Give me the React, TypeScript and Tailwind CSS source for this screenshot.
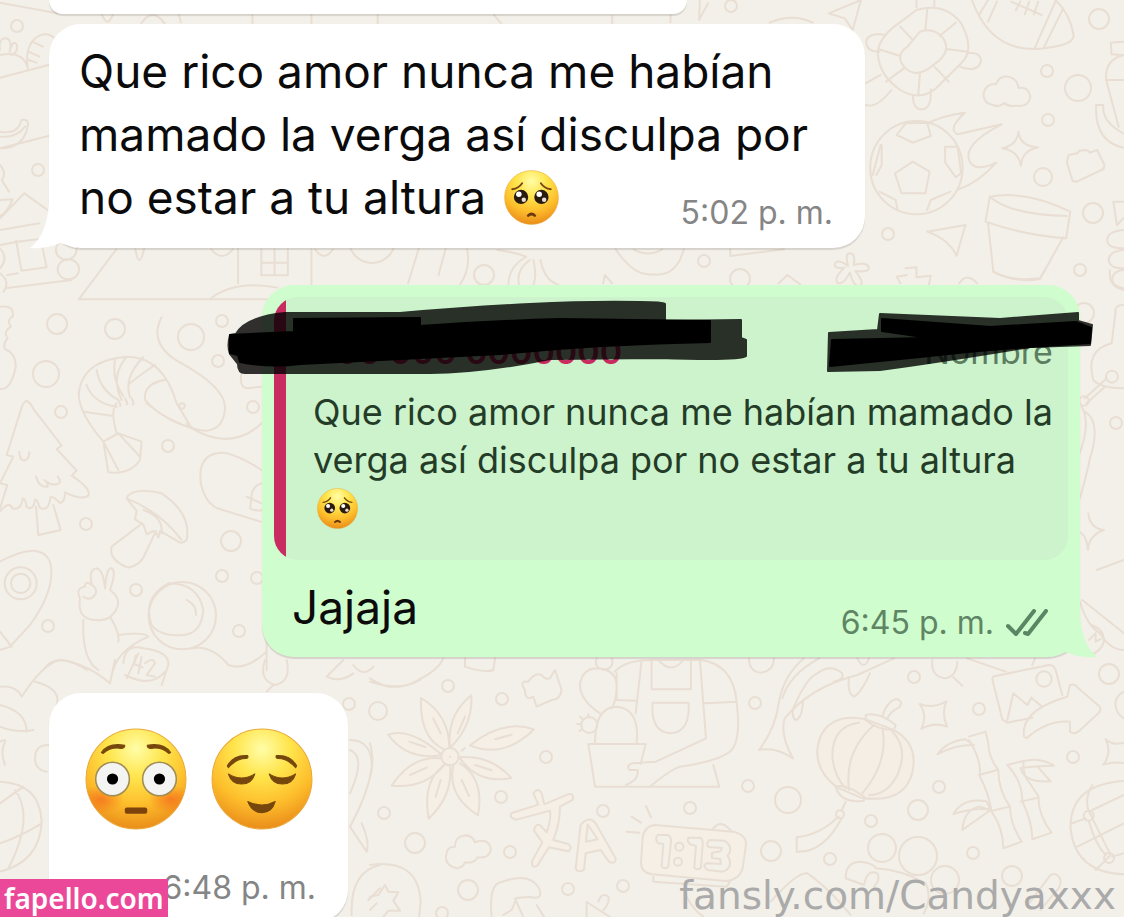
import type { ReactNode } from 'react';

const FONT = "font-['Inter','Liberation_Sans',sans-serif]";

// x, y, radius
const dots = [
  [57, 324, 10], [115, 329, 10], [191, 337, 13], [222, 321, 6], [218, 361, 6], [46, 374, 13], [61, 412, 6],
  [168, 446, 6], [253, 407, 6], [86, 524, 6], [231, 541, 10], [222, 576, 6], [257, 578, 6], [136, 590, 6],
  [48, 626, 6], [239, 631, 6], [731, 6, 6], [1099, 19, 10], [1047, 71, 6], [1078, 88, 13], [1048, 120, 6],
  [1043, 177, 9], [1093, 213, 10], [888, 234, 6], [1080, 270, 6], [704, 261, 6], [740, 279, 10], [17, 26, 6],
  [38, 170, 6], [484, 275, 10], [372, 240, 23], [1084, 313, 10], [1116, 423, 6], [448, 686, 6], [378, 711, 9],
  [502, 699, 6], [546, 757, 6], [501, 797, 6], [384, 813, 6], [415, 843, 10], [510, 852, 6], [468, 890, 10],
  [568, 889, 6], [623, 886, 6], [603, 811, 6], [690, 808, 6], [442, 913, 6], [755, 703, 6], [914, 677, 6],
  [979, 709, 6], [1109, 674, 10], [1073, 757, 6], [748, 786, 6], [788, 800, 13], [939, 787, 6], [918, 810, 10],
  [871, 821, 6], [771, 851, 10], [830, 859, 6], [973, 853, 6], [1012, 876, 10], [882, 848, 14], [918, 856, 19],
  [945, 880, 14], [349, 704, 6],
];

function Doodles() {
  return (
    <svg
      className="absolute inset-0 h-full w-full [&_*]:[vector-effect:non-scaling-stroke]"
      viewBox="0 0 1124 917"
      preserveAspectRatio="xMinYMin slice"
      fill="none"
      stroke="#e9ded3"
      strokeWidth="2"
      strokeLinecap="round"
      strokeLinejoin="round"
      aria-hidden="true"
    >
      {dots.map(([x, y, r]) => (
        <circle key={`${x}-${y}`} cx={x} cy={y} r={r} />
      ))}

      {/* top left: bread, banana, train */}
      <g transform="scale(.358 .3333)">
        <path d="M0 8L160 40M0 233L135 195M0 445L135 408M0 150q-5-35 15-35 20 0 12 40 10-40 20-20 5 20-15 30M0 165q65-15 78 40M78 205q-10-60 20-90 30-25 55 0M90 125l30 15M80 155l30 15M80 180l22 8" />
        <path d="M0 395q50 10 60-35 20-5 18 15-10 70-78 70M0 410q45 5 70-30M0 495q20 25 5 45l20 35M0 600l35-2q-15 40-35 50M0 655l68-75 65 50M0 690l110-20M0 735l50-10 75-10M45 722l15 90 70-10-15-80M0 745q25 30 0 60M0 820q30 25 10 55M15 865l185-25M20 825l30-5" />
        <circle cx="185" cy="750" r="29" /><circle cx="191" cy="808" r="30" />
        <path d="M325 748L220 898H760M378 745q10 70 25 0M665 745v105M730 748v78h74v-78M767 748v78M730 788h74M870 748v110M585 898q70-60 190-35M590 748q30 40 60 0M880 748q25 40 50 0M1170 745l-30 105M1245 745l-20 80M1305 748q10 60-20 105M1390 750q40 5 80 20-50 30-50 85M1480 780q-40 30-30 75M1490 780q10 50 0 75M1510 780q10 60 50 75" />
        <path d="M395 70q30-50 65 0M285 45q15 40 30 0M500 45l5 22M705 45v25M870 45v25M1055 45v25M1380 45l20 25" />
      </g>

      {/* top right: turtle, ball, football, bottle, pot */}
      <g transform="translate(562 0) scale(.358 .3333)">
        <path d="M140 48v22M303 45v22M385 0l-2 60 25-50M580 68q65-30 120 0M745 40L835 0 812 90 790 55zM990 0v22M1040 0v25" />
        <path d="M990 30q80-25 125 40 40 80 0 120l-70 75q-45 40-100 5-60-45-63-110 2-50 65-95z" />
        <path d="M1000 95q40-15 65 20 20 35-10 65l-30 25q-40 30-70-5-25-35 10-60zM945 80l35 40M1020 30l-5 60M1100 68l-45 40M1133 155l-60-8M1080 245l-40-45M995 285l5-65M905 245l50-40M885 148l60 20" />
        <path d="M905 105q-50-10-55 20 0 30 37 30M1132 160q40-5 38 25-10 35-60 15M980 285q0 45 28 43 25-5 22-60M890 225l-42 25M920 270q-40 55-72 45" />
        <path d="M1145 0q60 180 230 140 60-10 53-40-10-60-50-100M1165 45L1190 0M1190 65l25-60M1320 145L1380 0M1345 145l55-120M1255 5l85 40M1280 5l-12 25M1305 5l-12 38M1330 5l-12 38" />
        <path d="M1205 315q-30-5-27-35 5-30 35-28 10-30 40-20 20 8 22 32 30-5 33 28-5 30-40 25-20 5-32-8-15 15-31 6zM1275 395q5 45 55 47-45 10-48 55-8-45-52-52 42-10 45-50M1020 695l107-20-25 93q-20-50-82-73" />
        <ellipse cx="990" cy="503" rx="129" ry="140" />
        <path d="M980 485l47 30-12 65h-67l-18-60zM935 405l25-35 60-2 10 40-50 20zM890 435l-22 90M893 435v60l-15 30M1070 440h35l10 80-15 12-30-45zM887 575l45 25 5 30M1020 630l10-30 55-25M1020 370q50-25 105-32-50 50-20 65l123-30q-110 60-90 110 15 35 75 5-50 60-105 80" />
        <path d="M1410 485l5-20 25-5 5-8 20-2 10 8 20-8 20 45-2 12-75 38-12-2zM1195 590q100-20 225 45l-12 80q-120-10-225-50zM1195 590q60 55 215 58M1190 670l15 145q60 35 130 22l65-125M1568 125l-35 3 2 35 33 3M1520 240q-5-60 48-75M1520 240h48M1520 240l35 140M1492 315h20q-5 50 56 85M1492 315q-5 110 76 128M1540 605h28M1540 605l10 70 18-20M1568 690q-45 5-45 30 0 25 45 25M1568 750q-45 5-40 35 5 20 40 20M1568 810q-35 5-30 35 5 15 30 20" />
        <path d="M805 760q15 0 10 35 40-10 42 8 0 15-38 10 30 40 10 45-15 0-25-40-20 40-35 30-10-15 20-45-35 5-25-15 10-10 35 10-10-40 6-38zM960 805l30-3v30l40-5-5 28M945 850l-10-20 28-5M1110 850q20-35 50 0M605 850l25-25 35 28M115 850l5-25 20 25M150 748q50 80 100 75 70 10 90-75M200 748q40 25 80 0M470 748v20l150-20" />
      </g>

      {/* left column: shrimp, tree, mushroom, pin, astronaut */}
      <g transform="translate(0 270) scale(.3333)">
        <path d="M0 110q45-5 38 30-20 10-5 30-25 15-10 35-15 15-8 32 35 15 32 55-15 70-47 65M485 142q-40 75 45 130 150 80 145 145-5 60-55 65-40 0-60-20M575 475q120 70 210-15" />
        <path d="M310 515q-90-105-70-165 20-80 140-90 110 0 150 140l45 75q-70-20-135-75M350 490q-20-70 0-90M310 515l45-25 70 25-5 55q-30 45-95 37zM310 515l45 85M355 490l65 70M250 425l85 12M260 345q20 55 90 65M290 300q10 60 65 90M345 268q-10 60 25 110M380 260q-50 60-15 130M430 262q-60 60-40 120M465 285q-60 40-80 60M435 390q-5-50 60-60M435 390q40 50 140 85M355 390q10 20 5 18M375 385q10 20 5 18M395 385q10 20 3 18" />
        <circle cx="546" cy="408" r="8" />
        <path d="M80 392q-10 5-15 20L20 555l20 5-40 80 22 5L0 715M80 392q15 10 20 25l85 110-15 10 60 65-15 15q60 40 50 60-20 15-70-10 0 30-15 32-30-30-30-10-5 35-30 25-10-30-15-25-5 35-25 22-5-30-12-25-5 35-30 30-10-25-38 8M108 710l7 85 67-15-22-75M58 545q0 25 15 27 15-5 15-25M108 620q10 35 35 30 0-15-10-20 20 20 45 10 5-10-5-20" />
        <path d="M380 685q15-35 105-15 90 60 75 140-10 10-20 8l-60-35-5 20q-5-15-15-20l-20 10-10-30-25-15 5-25zM380 685q100 40 165 125M430 720q60 20 55 70M420 765l-85 65q-10 40 50 63 30-5 45-30l38-80" />
        <path d="M785 600Q690 540 650 550q-55 10-48 85 10 60 50 80l130 40M785 640q-30 10-30 40l-5 35q20 10 35 5M740 680l45 20M725 305q-10 50 20 50l40-5" />
        <path d="M0 875q120-65 150 0 20 80-60 190L30 1130 0 1140M0 1085l35 45" />
        <circle cx="62" cy="940" r="48" /><circle cx="62" cy="940" r="29" />
        <path d="M275 940q-10-40 15-45 20 5 25 60 5-65 20-60 15 10-5 65 40 30 15 65-20 30-55 25-60 0-50-65-15-30 15-35 0-20 20-5 20 10 10 30-15 20-35 5M250 1050q-5 120 45 150M330 1040q30 50 25 75M355 1095q80-10 90 5-90 40-105 100M370 1180q5-60 60-45 80 10 75 50l-20 60M575 1135q60-10 110 50 50 20 115-40M800 1110v90M130 1200q40-60 130 0" />
        <circle cx="547" cy="1037" r="101" />
        <path d="M455 1065q-30-80 50-125 90 0 105 80-5 70-60 75-70 5-95-30M560 990q30 15 28 45M407 1157l-5 25 25 10M425 1160l-10 50M435 1180q25-20 30 0l-25 35 25 5" />
      </g>
      <g transform="translate(0 660) scale(.3333)">
        <path d="M0 80q50-5 65 30Q130 10 180 0q80 10 150 70l15-70M105 65q80 20 65 70M0 135q80 20 80 80M0 200q50 20 100 10M0 245q20-10 15 0-15 30 0 70M145 255q-40 0-40 40 0 35 35 40M0 365q120 5 125 120-5 120-125 150M0 430l70-50M0 550q60-20 125-60M45 390q60 80-20 235M380 55l35-75M375 45q80 40 120-10M795 0q-20 60 30 75 50-10 35-75M820 75l-20 20M980 50l50-50M980 50q40 20 80-10M1060 15q30 40 60 5M1050 240q70 0 65 90-15 80-65 170M1050 270q50 20 0 130M1050 500l50 75q10-30-15-85M1140 615q-90 20-85 150M1105 720l35-35" />
      </g>

      {/* bottom middle: flower, puzzle, gardener, letters, clock */}
      <g transform="translate(370 650) scale(.3333)">
        <path d="M0 85q70 50 145 5 60-30 75-65M0 95q90 30 150-5M285 25v25q60 20 85 10l5-35M0 280q15 50 0 100" />
        <g fill="#f5efe6">
          <path d="M238 294q0-100-85-150-5 120 70 154M240 294q70-70 64-158-75 60-64 158M300 286q100-80 192-48-90 90-192 48M216 315Q120 230 54 254q60 80 162 61M215 325q-90-10-150 82 100 10 160-64M240 346q10 90-64 160-20-110 45-160M250 346q-20 90 74 150 20-110-54-156M268 322q90-10 156 62-100 20-156-62" />
          <circle cx="240" cy="320" r="26" />
        </g>
        <path d="M190 205l22 45M285 200l-22 50M375 268l50-14M118 275l48 16M120 375l50-22M212 390l-15 50M275 390l22 48M315 345l50 16M275 302l10-8M240 320v1" />
        <path d="M475 95q20-30 40-20 10 15 25 10l15-25 20 60q-5 30-30 30l-45 20-10-30q-25 15-25-20-20-30 10-25z" />
        <path d="M680 25q-10 30 25 35 30-10 20-35M690 190q-60-40-60-85 5-50 55-50 55 5 55 55 0 40-15 65M675 280q0-110 65-110 70 5 60 110M655 282h172l-15 60M655 282l20 128h373l-18-65M735 65q30-35 110-35h150q95 15 105 125M740 70v80l60 2M815 30l-18 160M845 30v88h118V30M865 30q40 45 75 0M990 30l18 235-150 70-70 5q-20 5-10 20h25q5 30-35 45M1005 160l95-5q15 120-20 150-40 30-150 45-30 10-90 60M848 158h108q5 90-55 92-60-5-53-92" />
        <circle cx="658" cy="225" r="24" />
        <path d="M630 200l8 8M622 222h10M628 243l8-5M655 193v8" />
        <path fill="#f5efe6" d="M490 430q15-20 25 0l8 33 70-30q20-5 15 17l-38 20q0 50-20 100l45 12q15 10 0 22l-58-12-35 55q-20 10-15-15l30-55-25-35q5-25 20-15l18 20q15-40 10-65l-100 27q-25-5-15-20l80-25zM632 525q25-30 45-5l60 105q0 20-20 10l-25-35-45 10-5 50q-20 10-25-5zM648 575l35-7-30-45z" />
        <path d="M260 655q-40-10-30-45 0-20 25-20 0-30 25-33 25-5 35 20 40-15 48 20-5 30-40 25-10 20-38 15-5 15-25 18zM0 645q145-20 152 110l-5 50M45 705l10 20 30 2-15 25 20 30h-35l-20 25M45 705l-20 30-25 5M20 760l-20 20M365 801q-10-100 30-105 80-30 110 15 20 40-25 30-30 0-45 5l25 55M650 801v-45l70 45M685 755q10-30 30-15 5 20-15 40M440 745l-15 35-25 15M500 765l25 40" />
        <path fill="#f5efe6" d="M855 525l235 20q40 10 38 40l-10 70q-10 35-50 38l-220-20q-35-5-35-35l5-75q5-35 37-38z" />
        <path fill="#f2f0e8" d="M863 555h30q12 5 10 20l-8 75q-10 10-20 0l5-68-15-2q-12-12-2-25zM955 563h35q10 5 8 20l-5 70q-12 10-20 0l5-65-18-5q-10-10-5-20zM1018 570l45 2q30 20 10 45 20 35-15 48l-45-5q-20-15 0-20l40 2-2-15-25-3v-15l25-5 5-10-40-3q-10-10 2-21z" />
        <circle cx="928" cy="590" r="12" /><circle cx="924" cy="635" r="12" />
        <path d="M1030 535q25-30 55 10M850 680v15l220 15 10-15M785 500l28 18M828 468l15 34M770 545l38 3M950 740q20 40 50 60" />
      </g>

      {/* bottom right: lantern, picture, bamboo, ball */}
      <g transform="translate(744 600) scale(.3333)">
        <path d="M15 175q0 40 35 43 40-5 40-43M180 175q-60 50-75 130-10 80-60 145 50-10 102 25-40-70-25-120Q200 260 340 225L450 175M225 175q-90 50-110 120M150 320q40-90 70-100 40-30 75 0 5 20-25 25M150 320q-10 30 5 40 20-5 22-60M315 235q-5 45 15 55 20-10 48-70M340 175q20 40 35 0M565 180q-5 50 38 55 35-5 37-50M628 232l27 25M670 175l115 40" />
        <path d="M745 238q0-10 10-10l160-33q15 0 20 15l20 75M745 238l30 120 15 10 75-15M790 360l18-80 42 35 12-22 30 25M840 410q-10-70 100-110l30-10 8-35q15-5 20 5l70 60q5 10-5 20l-60 55q-15 10-25 0v-30q-70-5-130 50zM865 195l8-20" />
        <circle cx="900" cy="237" r="23" />
        <path d="M527 312q40 15 80-8-15 35 2 76-40-15-77 7 20-40-5-75M1085 418q20 20 55 10M1078 494q30-10 62-5M1085 418q20 40-7 76M1140 275q-30 15-25 45 5 25 25 35" />
        <path fill="#f4eee5" d="M365 358q-100-20-135 50-35 90 50 155l70 30q130 20 155-75 20-90-60-130z" />
        <path d="M365 345q40-10 90 30l-5 15q-50 0-85-30zM275 560q30-10 85 30v12q-70 10-85-42M345 368q-80 10-80 100 5 60 40 98M390 375q-90 80-75 195M415 385q20 100-60 195M445 395q50 50 15 130-30 60-85 60M415 350q15-50 45-53 20 10 5 25-30 15-35 35M305 605l-12 28M283 650q-55 55-125 62v43q80 5 135-100" /><circle cx="288" cy="643" r="12" />
        <path d="M675 410l50-15 8 35q0 40 30 80 0 60 35 110 0 50 35 105l-55 20q0-60-35-110-10-60-35-105 5-50-33-110M705 525l55-15M745 632l52-12M690 435q-60 0-110 28 30-40 85-45l20 15M790 495l48-12q0 50 15 60l30 45q0 60 40 110l-58 20q0-50-30-115 0-60-45-108M830 605l52-12M835 485q50-15 95 12l-50 2 40 45q-80 5-90-40l50-5M740 630l-85 60q5-60 50-70zM740 630q-40-10-112 12 30-50 100-38z" />
        <path d="M1140 543q-165 10-160 145 15 130 160 135M1045 630l95-45M1000 740l140-70M1045 555q-25 40-10 80l65 130-45 45M985 670l40-15M1105 770l35-10M1035 665q20 70 50 100" />
        <circle cx="1034" cy="647" r="15" /><circle cx="1095" cy="774" r="15" />
        <path d="M80 905q80-90 110-85 60 40 130 125M305 835q0-50 45-50 40 5 45 20 80 5 150 45 20 40-5 90M305 835l55 20q10-50 40-35 10 20-10 40M855 910l65-85q20-10 30 15 0 20-10 30l-50 60M1008 5q20 70 60 95 30 50 72 50M1015 0l125 100M1040 75q40 10 40 50-10 30-40 40M1035 120l20-20v25l15-8" />
      </g>
      <g transform="translate(760 270) scale(.3333)">
        <path d="M700 5q50 30 140 20l15-25M1050 0q-5 50 42 60M1092 105q-30 0-25 20l-12 95q-80 20-55 110 20 25 92 25M1040 325l-65 60M1035 350l-55 50M975 425q50 30 15 140-10 50-30 120M965 410q30 50-10 150M985 730q5 45 47 50-45 15-48 60-5-50-30-55M1010 900l82-30" />
        <circle cx="1056" cy="320" r="18" /><circle cx="972" cy="393" r="14" />
      </g>
    </svg>
  );
}

function FaceBase({ id, children, className }: { id: string; children: ReactNode; className: string }) {
  return (
    <svg className={className} viewBox="0 0 100 100" role="img">
      <defs>
        <radialGradient id={`${id}-face`} cx="50%" cy="20%" r="80%">
          <stop offset="0" stopColor="#fffda8" />
          <stop offset=".35" stopColor="#ffe54c" />
          <stop offset=".7" stopColor="#fdbd2b" />
          <stop offset="1" stopColor="#ea8d1a" />
        </radialGradient>
        <radialGradient id={`${id}-blush`}>
          <stop offset="0" stopColor="#f4661c" stopOpacity=".7" />
          <stop offset="1" stopColor="#f4661c" stopOpacity="0" />
        </radialGradient>
        <clipPath id={`${id}-clip`}>
          <circle cx="50" cy="50" r="49" />
        </clipPath>
      </defs>
      <circle cx="50" cy="50" r="49" fill={`url(#${id}-face)`} stroke="#e9a93a" strokeWidth="1" />
      <g clipPath={`url(#${id}-clip)`}>{children}</g>
    </svg>
  );
}

function PleadingFace({ id, className }: { id: string; className: string }) {
  return (
    <FaceBase id={id} className={className}>
      <path d="M15 35Q27 33 33 24M85 35Q73 33 67 24" fill="none" stroke="#7a4a12" strokeWidth="3.5" strokeLinecap="round" />
      <circle cx="31" cy="49" r="13" fill="#2a1a10" />
      <circle cx="68" cy="49" r="13" fill="#2a1a10" />
      <circle cx="27" cy="44" r="5" fill="#fff" />
      <circle cx="64" cy="44" r="5" fill="#fff" />
      <circle cx="36" cy="54" r="4" fill="#e8dfd8" />
      <circle cx="73" cy="54" r="4" fill="#e8dfd8" />
      <path d="M44 83Q50 77 56 83" fill="none" stroke="#6b3a10" strokeWidth="5" strokeLinecap="round" />
    </FaceBase>
  );
}

function FlushedFace() {
  return (
    <FaceBase id="flushed" className="size-[102px]">
      <ellipse cx="16" cy="70" rx="22" ry="14" fill="url(#flushed-blush)" />
      <ellipse cx="84" cy="70" rx="22" ry="14" fill="url(#flushed-blush)" />
      <path d="M16 24Q23 14 39 17Q39 20 36 20Q25 18 18 25ZM84 24Q77 14 61 17Q61 20 64 20Q75 18 82 25Z" fill="#76470c" stroke="#76470c" strokeLinejoin="round" />
      <circle cx="27" cy="50" r="16.5" fill="#f4f4f2" stroke="#a08c55" strokeWidth="1.5" />
      <circle cx="73" cy="50" r="16.5" fill="#f4f4f2" stroke="#a08c55" strokeWidth="1.5" />
      <circle cx="27" cy="50" r="5.5" fill="#000" />
      <circle cx="73" cy="50" r="5.5" fill="#000" />
      <rect x="39" y="78" width="22" height="6" rx="2" fill="#7d430d" />
    </FaceBase>
  );
}

function RelievedFace() {
  return (
    <FaceBase id="relieved" className="size-[102px]">
      <path d="M16 37Q22 26 36 27Q37 30 34 30Q25 30 17 39ZM84 37Q78 26 64 27Q63 30 66 30Q75 30 83 39Z" fill="#76470c" stroke="#76470c" strokeLinejoin="round" />
      <path d="M17 45Q30 53 43 45Q40 55 30 55Q20 55 17 45ZM57 45Q70 53 83 45Q80 55 70 55Q60 55 57 45Z" fill="#76470c" stroke="#76470c" strokeLinejoin="round" />
      <path d="M36 72Q50 79 63 72Q60 83 50 83Q40 83 36 72Z" fill="#76470c" stroke="#76470c" strokeLinejoin="round" />
    </FaceBase>
  );
}

function Ticks() {
  return (
    <svg className="h-[28px] w-[42px]" viewBox="0 0 42 28" fill="none" stroke="#5c8563" strokeWidth="3" strokeLinecap="round" strokeLinejoin="round" role="img" aria-label="Entregado">
      <path strokeWidth="4" d="M2 17l8 8L28 2M19 24l3 1L40 2" />
    </svg>
  );
}

// marker strokes over the quoted sender
function Scribble() {
  return (
    <svg className="absolute -left-[42px] top-[5px] h-[90px] w-[880px]" viewBox="220 290 880 90" aria-hidden="true">
      <g fill="#000" stroke="#000" strokeWidth="2" strokeLinejoin="round">
        <path opacity=".8" d="M236 334Q245 317 285 313H400Q470 307 530 304T640 302Q663 302 665 304V321L741 320V338L746 340V356Q740 361 660 358L550 359Q480 373 430 373H245Q238 373 238 364L230 354Q227 346 230 335Z" />
        <path d="M230 335L294 332V319L420 318V326Q490 321 560 319L710 321V342Q600 344 500 354L300 364Q270 368 240 362L238 355L230 353Z" />
        <path opacity=".8" d="M880 314L1000 319L1078 313V321L1092 325L1090 345L1030 347Q940 362 880 370L828 371L829 333L878 330Z" />
        <path d="M882 319L990 327L1076 322L1091 328L1090 343Q1000 348 920 357L830 366L832 340L930 338L882 331Z" />
      </g>
    </svg>
  );
}

export default function App() {
  return (
    <main className={`relative h-screen w-full overflow-hidden bg-[#f2f0e8] text-[#0b0b0b] ${FONT}`}>
      <Doodles />

      <section className="relative flex flex-col pl-[49px] pr-11">
        <div className="h-[14px] w-[638px] max-w-full rounded-b-[30px] bg-white shadow-[0_2px_1px_rgba(0,0,0,0.12)]" />

        {/* incoming message */}
        <article className="relative mt-[10px] w-[816px] max-w-full rounded-[32px] bg-white pb-[19px] pl-[30px] pr-[32px] pt-4 shadow-[0_2px_1px_rgba(0,0,0,0.12)]">
          <svg className="absolute -bottom-px -left-[19px] h-[46px] w-[46px]" viewBox="0 0 46 46" aria-hidden="true">
            <path d="M19 0Q17 32 0 45Q18 46 30 40L46 45V0Z" fill="#fff" />
          </svg>
          <p className="relative whitespace-nowrap text-[46px] leading-[63px]">
            Que rico amor nunca me habían
            <br />
            mamado la verga así disculpa por
          </p>
          <div className="relative flex items-end justify-between">
            <p className="flex items-center gap-[18px] whitespace-nowrap text-[46px] leading-[63px]">
              no estar a tu altura
              <PleadingFace id="pleading" className="size-[55px]" />
            </p>
            <time className="whitespace-nowrap text-[32px] leading-[32px] text-[#858585]">5:02 p. m.</time>
          </div>
        </article>

        {/* reply with quote */}
        <article className="relative mt-[37px] w-[818px] max-w-full self-end rounded-[32px] bg-[#cffdcd] p-3 pb-[18px] shadow-[0_2px_1px_rgba(0,0,0,0.12)]">
          <svg className="absolute -bottom-px -right-[17px] h-[46px] w-[46px]" viewBox="0 0 46 46" aria-hidden="true">
            <path d="M29 0Q30 32 46 45Q26 46 15 40L0 45V0Z" fill="#cffdcd" />
          </svg>
          <blockquote className="relative flex overflow-hidden rounded-[24px] bg-[#ccf3cc]">
            <div className="w-3 shrink-0 bg-[#c92c61]" />
            <div className="flex-1 pb-7 pl-[27px] pr-5 pt-[31px] text-[36px] leading-[48px] text-[#243c27]">
              <div className="mb-3 flex justify-between text-[34px]">
                <span className="font-semibold text-[#c92c61]">+00 000 0000000</span>
                <span className="text-[#5c7d60]">Nombre</span>
              </div>
              <p className="whitespace-nowrap">
                Que rico amor nunca me habían mamado la
                <br />
                verga así disculpa por no estar a tu altura
              </p>
              <div className="flex h-12 items-center pl-1">
                <PleadingFace id="pleading-quote" className="size-[41px]" />
              </div>
            </div>
          </blockquote>
          <div className="relative mt-4 flex items-end justify-between pl-[18px] pr-5">
            <p className="text-[46px] leading-[63px]">Jajaja</p>
            <div className="flex items-center gap-3">
              <time className="whitespace-nowrap text-[32px] leading-[32px] text-[#5f8565]">6:45 p. m.</time>
              <Ticks />
            </div>
          </div>
          <Scribble />
        </article>

        {/* emoji message */}
        <article className="mt-9 w-[299px] rounded-[32px] bg-white pb-[18px] pt-[35px] shadow-[0_2px_1px_rgba(0,0,0,0.12)]">
          <div className="flex gap-6 pl-9">
            <FlushedFace />
            <RelievedFace />
          </div>
          <time className="mt-[42px] block whitespace-nowrap pr-8 text-right text-[32px] leading-[32px] text-[#858585]">
            6:48 p. m.
          </time>
        </article>
      </section>

      {/* watermarks */}
      <div className="absolute bottom-0 left-0 bg-[#ec4899] px-1 font-['Noto_Sans',sans-serif] text-[28px] font-semibold leading-[38px] text-white">
        fapello.com
      </div>
      <div className="absolute bottom-0 right-2 font-['DejaVu_Sans',sans-serif] text-[39px] leading-[42px] text-[#aaaaaa]">
        fansly.com/Candyaxxx
      </div>
    </main>
  );
}
